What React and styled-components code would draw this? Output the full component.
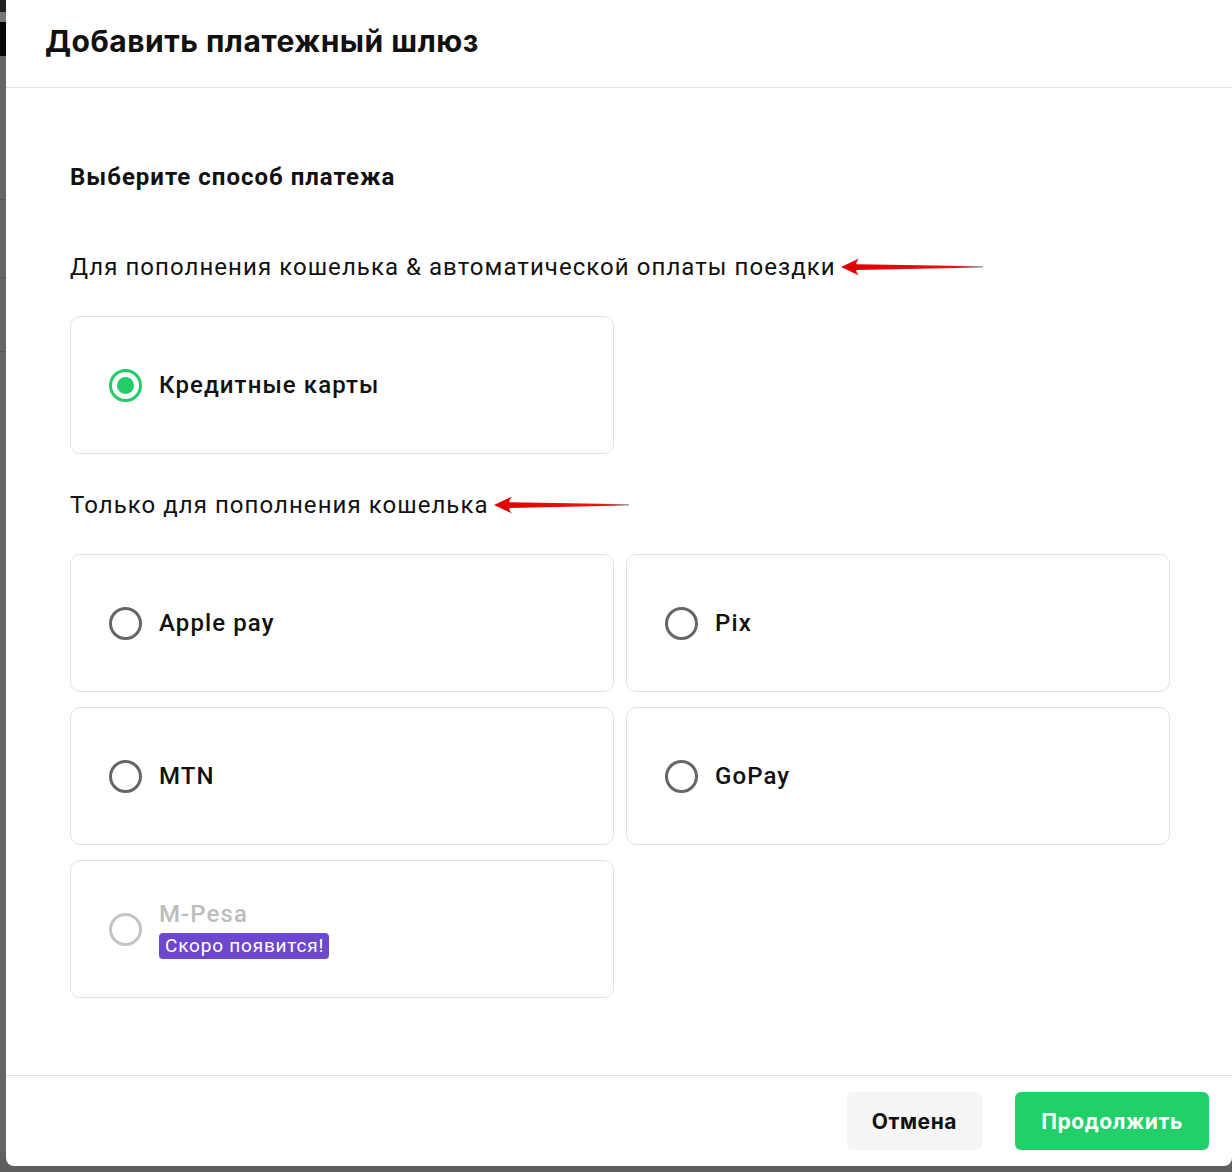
import styled, { createGlobalStyle } from 'styled-components';

const GlobalStyle = createGlobalStyle`
  html, body {
    margin: 0;
    padding: 0;
    background: #5f5f5f;
  }
  * {
    box-sizing: border-box;
  }
`;

const Screen = styled.div`
  display: flex;
  width: 1232px;
  height: 1172px;
  background: #5f5f5f;
  overflow: hidden;
`;

const Backdrop = styled.div`
  display: flex;
  flex-direction: column;
  width: 6px;
  flex-shrink: 0;
`;

const BackdropPiece = styled.div`
  height: ${({ h }) => h}px;
  background: ${({ bg }) => bg || '#666'};
  border-bottom: ${({ line }) => (line ? '1px solid #555' : 'none')};
`;

const Modal = styled.div`
  flex: 1;
  height: 1166px;
  display: flex;
  flex-direction: column;
  background: #fff;
  border-radius: 0 0 8px 8px;
  font-family: Roboto, 'Noto Sans', sans-serif;
  color: #111;
`;

const Header = styled.div`
  height: 88px;
  padding: 0 0 5px 39px;
  display: flex;
  align-items: center;
  border-bottom: 1px solid #e3e3e3;
`;

const Title = styled.h1`
  margin: 0;
  font-family: Inter, 'Noto Sans', sans-serif;
  font-size: 30px;
  font-weight: 700;
  letter-spacing: 0.5px;
  color: #111;
`;

const Body = styled.div`
  flex: 1;
  padding: 73px 62px 0 64px;
`;

const Subtitle = styled.div`
  font-size: 24px;
  font-weight: 700;
  line-height: 32px;
  letter-spacing: 1px;
`;

const SectionLabel = styled.div`
  display: flex;
  align-items: center;
  margin-top: ${({ top }) => top}px;
  font-size: 24px;
  line-height: 32px;
  letter-spacing: 1.05px;
`;

const Arrow = styled.svg`
  display: block;
  margin-left: 4px;
`;

const Grid = styled.div`
  display: grid;
  grid-template-columns: repeat(2, 544px);
  column-gap: 12px;
  row-gap: 15px;
  margin-top: ${({ top }) => top}px;
`;

const Card = styled.div`
  height: 138px;
  display: flex;
  align-items: center;
  gap: 17px;
  padding-left: 38px;
  border: 1px solid #e2e2e2;
  border-radius: 10px;
  background: #fff;
`;

const Radio = styled.span`
  width: 33px;
  height: 33px;
  flex-shrink: 0;
  border-radius: 50%;
  border: 3px solid ${({ checked, disabled }) =>
    checked ? '#22cc66' : disabled ? '#c4c4c4' : '#666'};
  display: flex;
  align-items: center;
  justify-content: center;

  &::after {
    content: '';
    display: ${({ checked }) => (checked ? 'block' : 'none')};
    width: 17px;
    height: 17px;
    border-radius: 50%;
    background: #22cc66;
  }
`;

const OptionText = styled.div`
  display: flex;
  flex-direction: column;
  align-items: flex-start;
  gap: 5px;
`;

const OptionLabel = styled.span`
  font-size: 24px;
  font-weight: 500;
  letter-spacing: 1.1px;
  color: ${({ disabled }) => (disabled ? '#bdbdbd' : '#111')};
`;

const Badge = styled.span`
  background: #6d48cf;
  color: #fff;
  font-size: 19px;
  line-height: 26px;
  letter-spacing: 0.8px;
  padding: 0 5px 0 6px;
  border-radius: 4px;
`;

const Footer = styled.div`
  height: 91px;
  display: flex;
  align-items: center;
  justify-content: flex-end;
  gap: 33px;
  padding: 0 23px 0 0;
  border-top: 1px solid #e3e3e3;
`;

const Button = styled.button`
  height: 58px;
  padding: 0 ${({ px }) => px}px;
  border: none;
  border-radius: 6px;
  font-family: Inter, 'Noto Sans', sans-serif;
  font-size: 21px;
  font-weight: 700;
  letter-spacing: 0.6px;
  background: ${({ primary }) => (primary ? '#22d069' : '#f5f5f5')};
  color: ${({ primary }) => (primary ? '#fff' : '#111')};
  cursor: pointer;
`;

const RedArrow = ({ width }) => (
  <Arrow width={width} height="20" viewBox={`0 0 ${width} 20`}>
    <defs>
      <linearGradient id={`shaft${width}`} x1="0" y1="0" x2="1" y2="0">
        <stop offset="0" stopColor="#e00000" />
        <stop offset="0.8" stopColor="#e81212" />
        <stop offset="1" stopColor="#8f8f8f" />
      </linearGradient>
    </defs>
    <path
      d={`M1 10 L19 1.5 Q15.5 6 16.5 7.3 L${width - 1} 9.2 L${width - 1} 10.4 L16.5 12.9 Q15.5 14.5 19 18.5 Z`}
      fill={`url(#shaft${width})`}
    />
  </Arrow>
);

const Option = ({ label, checked, disabled, badge }) => (
  <Card>
    <Radio checked={checked} disabled={disabled} />
    <OptionText>
      <OptionLabel disabled={disabled}>{label}</OptionLabel>
      {badge && <Badge>{badge}</Badge>}
    </OptionText>
  </Card>
);

export default function App() {
  const walletOptions = [
    { label: 'Apple pay' },
    { label: 'Pix' },
    { label: 'MTN' },
    { label: 'GoPay' },
    { label: 'M-Pesa', disabled: true, badge: 'Скоро появится!' },
  ];

  return (
    <>
      <GlobalStyle />
      <Screen>
        <Backdrop>
          <BackdropPiece h={12} bg="#222" />
          <BackdropPiece h={10} bg="#777" />
          <BackdropPiece h={34} bg="#050505" />
          <BackdropPiece h={144} line />
          <BackdropPiece h={78} line />
          <BackdropPiece h={74} line />
          <BackdropPiece h={800} />
        </Backdrop>
        <Modal>
          <Header>
            <Title>Добавить платежный шлюз</Title>
          </Header>
          <Body>
            <Subtitle>Выберите способ платежа</Subtitle>
            <SectionLabel top={58}>
              Для пополнения кошелька &amp; автоматической оплаты поездки
              <RedArrow width={144} />
            </SectionLabel>
            <Grid top={33}>
              <Option label="Кредитные карты" checked />
            </Grid>
            <SectionLabel top={35}>
              Только для пополнения кошелька
              <RedArrow width={137} />
            </SectionLabel>
            <Grid top={33}>
              {walletOptions.map((opt) => (
                <Option key={opt.label} {...opt} />
              ))}
            </Grid>
          </Body>
          <Footer>
            <Button px={25}>Отмена</Button>
            <Button primary px={26}>Продолжить</Button>
          </Footer>
        </Modal>
      </Screen>
    </>
  );
}
